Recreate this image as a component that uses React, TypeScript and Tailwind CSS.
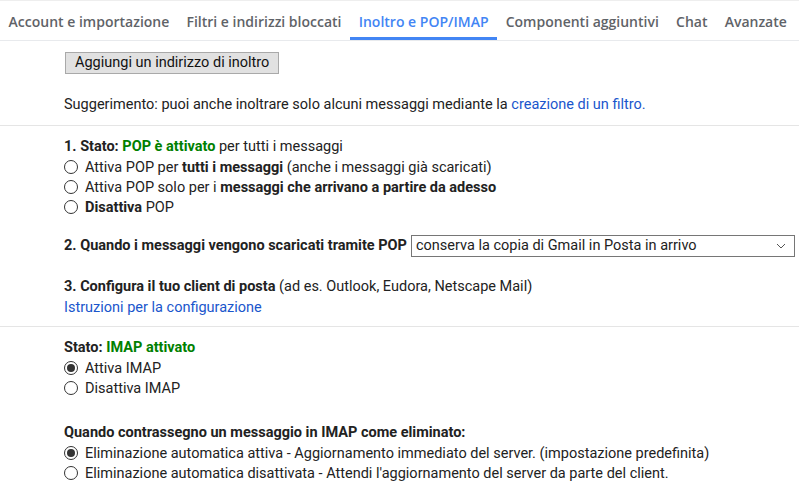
import React from 'react'

const tabs = [
  'Account e importazione',
  'Filtri e indirizzi bloccati',
  'Inoltro e POP/IMAP',
  'Componenti aggiuntivi',
  'Chat',
  'Avanzate',
]

function Radio({ checked = false }: { checked?: boolean }) {
  return (
    <span className="inline-flex h-[14px] w-[14px] shrink-0 items-center justify-center rounded-full border border-[#333] bg-white">
      {checked && <span className="h-[8px] w-[8px] rounded-full bg-[#333]" />}
    </span>
  )
}

function Option({ checked, children }: { checked?: boolean; children: React.ReactNode }) {
  return (
    <div className="flex h-5 items-center gap-[7px]">
      <Radio checked={checked} />
      <span className="pt-px">{children}</span>
    </div>
  )
}

export default function App() {
  return (
    <div
      className="h-[494px] w-[799px] overflow-hidden border-t border-[#eeeeee] bg-white text-[14.5px] leading-5 text-[#222]"
      style={{ fontFamily: 'Roboto, "Liberation Sans", sans-serif' }}
    >
      {/* Tabs */}
      <div className="flex h-10 border-b border-[#e8eaed]" style={{ fontFamily: '"Open Sans", Roboto, sans-serif' }}>
        {tabs.map((t) => {
          const active = t === 'Inoltro e POP/IMAP'
          return (
            <div
              key={t}
              className={`flex items-center border-b-[3px] px-[8.6px] pt-[5px] text-[14px] font-semibold ${
                active ? 'border-[#4285f4] text-[#4285f4]' : 'border-transparent text-[#5f6368]'
              }`}
            >
              {t}
            </div>
          )
        })}
      </div>

      {/* Forwarding */}
      <div className="pl-16 pt-[11px] pb-[10px]">
        <button className="ml-px h-[22px] border border-[#a9a9a9] bg-[#e1e1e1] px-[9px] text-[14.5px] leading-5 text-[#111]">
          Aggiungi un indirizzo di inoltro
        </button>
        <div className="mt-[21px]">
          Suggerimento: puoi anche inoltrare solo alcuni messaggi mediante la{' '}
          <span className="text-[#1a56cc]">creazione di un filtro.</span>
        </div>
      </div>
      <div className="h-px bg-[#e5e5e5]" />

      {/* POP */}
      <div className="pl-16 pt-[11px] pb-[8px]">
        <div>
          <b className="font-bold">1. Stato: </b>
          <b className="font-bold text-[#008000]">POP è attivato</b> per tutti i messaggi
        </div>
        <Option>
          Attiva POP per <b>tutti i messaggi</b> (anche i messaggi già scaricati)
        </Option>
        <Option>
          Attiva POP solo per i <b>messaggi che arrivano a partire da adesso</b>
        </Option>
        <Option>
          <b>Disattiva</b> POP
        </Option>

        <div className="mt-[18px] flex h-[22px] items-center">
          <b className="mr-1">2. Quando i messaggi vengono scaricati tramite POP</b>
          <div className="flex h-[22px] w-[384px] items-center justify-between border border-[#767676] pl-1 pr-2">
            <span>conserva la copia di Gmail in Posta in arrivo</span>
            <svg width="10" height="6" viewBox="0 0 10 6" fill="none" stroke="#555" strokeWidth="1">
              <path d="M1 1l4 4 4-4" />
            </svg>
          </div>
        </div>

        <div className="mt-[20px]">
          <b>3. Configura il tuo client di posta</b> (ad es. Outlook, Eudora, Netscape Mail)
        </div>
        <div className="pt-px text-[#1a56cc]">Istruzioni per la configurazione</div>
      </div>
      <div className="h-px bg-[#e5e5e5]" />

      {/* IMAP */}
      <div className="pl-16 pt-[11px]">
        <div>
          <b>Stato: </b>
          <b className="text-[#008000]">IMAP attivato</b>
        </div>
        <Option checked>Attiva IMAP</Option>
        <Option>Disattiva IMAP</Option>

        <div className="mt-[25px]">
          <b>Quando contrassegno un messaggio in IMAP come eliminato:</b>
        </div>
        <Option checked>
          Eliminazione automatica attiva - Aggiornamento immediato del server. (impostazione predefinita)
        </Option>
        <Option>
          Eliminazione automatica disattivata - Attendi l'aggiornamento del server da parte del client.
        </Option>
      </div>
    </div>
  )
}
